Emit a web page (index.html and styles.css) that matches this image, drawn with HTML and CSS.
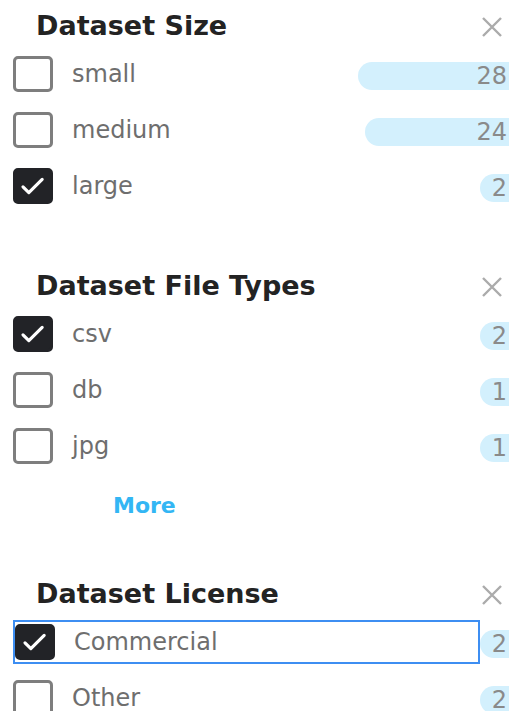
FILE: index.html
```html
<!DOCTYPE html>
<html lang="en">
<head>
<meta charset="utf-8">
<title>Dataset filters</title>
<link rel="stylesheet" href="styles.css">
</head>
<body>
<div class="panel">

  <section class="facet">
    <header class="facet-head">
      <h2 class="facet-title">Dataset Size</h2>
      <button class="facet-clear" aria-label="Clear">
        <svg viewBox="0 0 22 22" width="22" height="22"><path d="M2 2 L20 20 M20 2 L2 20"/></svg>
      </button>
    </header>
    <ul class="facet-list">
      <li class="facet-row">
        <label class="facet-label"><span class="box"></span><span class="name">small</span></label>
        <span class="count" style="width:162px">28</span>
      </li>
      <li class="facet-row">
        <label class="facet-label"><span class="box"></span><span class="name">medium</span></label>
        <span class="count" style="width:155px">24</span>
      </li>
      <li class="facet-row">
        <label class="facet-label"><span class="box is-checked"><svg viewBox="0 0 40 36"><path d="M8 19 L15 26 L31 10"/></svg></span><span class="name">large</span></label>
        <span class="count" style="width:40px">2</span>
      </li>
    </ul>
  </section>

  <section class="facet">
    <header class="facet-head">
      <h2 class="facet-title">Dataset File Types</h2>
      <button class="facet-clear" aria-label="Clear">
        <svg viewBox="0 0 22 22" width="22" height="22"><path d="M2 2 L20 20 M20 2 L2 20"/></svg>
      </button>
    </header>
    <ul class="facet-list">
      <li class="facet-row">
        <label class="facet-label"><span class="box is-checked"><svg viewBox="0 0 40 36"><path d="M8 19 L15 26 L31 10"/></svg></span><span class="name">csv</span></label>
        <span class="count" style="width:40px">2</span>
      </li>
      <li class="facet-row">
        <label class="facet-label"><span class="box"></span><span class="name">db</span></label>
        <span class="count" style="width:40px">1</span>
      </li>
      <li class="facet-row">
        <label class="facet-label"><span class="box"></span><span class="name">jpg</span></label>
        <span class="count" style="width:40px">1</span>
      </li>
    </ul>
    <a class="facet-more" href="#">More</a>
  </section>

  <section class="facet">
    <header class="facet-head">
      <h2 class="facet-title">Dataset License</h2>
      <button class="facet-clear" aria-label="Clear">
        <svg viewBox="0 0 22 22" width="22" height="22"><path d="M2 2 L20 20 M20 2 L2 20"/></svg>
      </button>
    </header>
    <ul class="facet-list">
      <li class="facet-row">
        <label class="facet-label is-focused"><span class="box is-checked"><svg viewBox="0 0 40 36"><path d="M8 19 L15 26 L31 10"/></svg></span><span class="name">Commercial</span></label>
        <span class="count" style="width:40px">2</span>
      </li>
      <li class="facet-row">
        <label class="facet-label"><span class="box"></span><span class="name">Other</span></label>
        <span class="count" style="width:40px">2</span>
      </li>
    </ul>
  </section>

</div>
</body>
</html>
```

FILE: styles.css
```css
* { box-sizing: border-box; }

html, body {
  margin: 0;
  padding: 0;
  background: #ffffff;
  overflow: hidden;
}

body {
  font-family: "DejaVu Sans", "Liberation Sans", sans-serif;
  color: #222;
}

.panel {
  width: 520px;
  padding-top: 2px;
  padding-left: 13px;
}

.facet {
  padding-top: 8px;
}

.facet + .facet {
  margin-top: 48px;
}

/* heading line with the clear button */
.facet-head {
  display: flex;
  align-items: center;
  justify-content: space-between;
  height: 32px;
  padding-left: 23px;
  padding-right: 17px;
}

.facet-title {
  margin: 0;
  font-size: 27px;
  line-height: 32px;
  font-weight: 700;
  color: #232323;
}

.facet-clear {
  display: flex;
  padding: 0;
  border: 0;
  background: none;
  margin-top: 2px;
}

.facet-clear svg path {
  stroke: #ababab;
  stroke-width: 2.4;
  fill: none;
}

.facet-list {
  list-style: none;
  margin: 4px 0 0;
  padding: 0;
}

/* label and count bar share one cell; the bar sits under the label's right end */
.facet-row {
  display: grid;
  grid-template-columns: 467px 40px;
  align-items: center;
  height: 56px;
}

.facet-label {
  grid-column: 1;
  grid-row: 1;
  display: flex;
  align-items: center;
  height: 44px;
}

.facet-label.is-focused {
  box-shadow: inset 0 0 0 2px #3d8ef2;
  padding-left: 2px;
}

.box {
  flex: none;
  width: 40px;
  height: 36px;
  border: 3px solid #7e7e7e;
  border-radius: 5px;
  display: flex;
}

.box.is-checked {
  background: #222327;
  border-color: #222327;
}

.box svg {
  width: 100%;
  height: 100%;
}

.box svg path {
  fill: none;
  stroke: #ffffff;
  stroke-width: 3.8;
  stroke-linecap: round;
  stroke-linejoin: round;
}

.name {
  margin-left: 19px;
  font-size: 24px;
  line-height: 28px;
  color: #6e6e6e;
}

.count {
  grid-column: 1 / 3;
  grid-row: 1;
  justify-self: end;
  position: relative;
  top: 2px;
  height: 28px;
  padding-right: 13px;
  border-radius: 14px 0 0 14px;
  background: #d3f0fd;
  color: #8a8a8a;
  font-size: 24px;
  line-height: 28px;
  text-align: right;
}

.facet-more {
  display: block;
  margin-top: 16px;
  padding-left: 100px;
  height: 32px;
  font-size: 22px;
  line-height: 32px;
  font-weight: 700;
  color: #33b6f4;
  text-decoration: none;
}
```
